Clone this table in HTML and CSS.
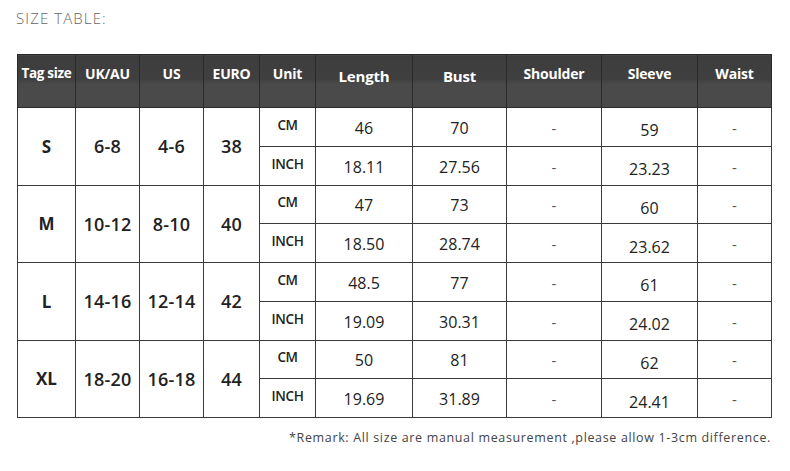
FILE: index.html
```html
<!DOCTYPE html>
<html>
<head>
<meta charset="utf-8">
<link rel="stylesheet" href="styles.css">
</head>
<body>
<div class="page">
  <div class="title">SIZE TABLE:</div>
  <table class="sizes">
    <colgroup>
      <col class="c-tag"><col class="c-uk"><col class="c-us"><col class="c-eu"><col class="c-unit">
      <col class="c-len"><col class="c-bust"><col class="c-sho"><col class="c-sle"><col class="c-wai">
    </colgroup>
    <thead>
      <tr>
        <th class="small">Tag size</th><th>UK/AU</th><th>US</th><th>EURO</th><th>Unit</th>
        <th class="big">Length</th><th class="big">Bust</th><th>Shoulder</th><th>Sleeve</th><th>Waist</th>
      </tr>
    </thead>
    <tbody>
      <tr><td rowspan="2" class="sz">S</td><td rowspan="2" class="num">6-8</td><td rowspan="2" class="num">4-6</td><td rowspan="2" class="num">38</td><td class="unit">CM</td><td>46</td><td>70</td><td class="dash">-</td><td class="low">59</td><td class="dash">-</td></tr>
      <tr><td class="unit">INCH</td><td>18.11</td><td>27.56</td><td class="dash">-</td><td class="low">23.23</td><td class="dash">-</td></tr>
      <tr><td rowspan="2" class="sz">M</td><td rowspan="2" class="num">10-12</td><td rowspan="2" class="num">8-10</td><td rowspan="2" class="num">40</td><td class="unit">CM</td><td>47</td><td>73</td><td class="dash">-</td><td class="low">60</td><td class="dash">-</td></tr>
      <tr><td class="unit">INCH</td><td>18.50</td><td>28.74</td><td class="dash">-</td><td class="low">23.62</td><td class="dash">-</td></tr>
      <tr><td rowspan="2" class="sz">L</td><td rowspan="2" class="num">14-16</td><td rowspan="2" class="num">12-14</td><td rowspan="2" class="num">42</td><td class="unit">CM</td><td>48.5</td><td>77</td><td class="dash">-</td><td class="low">61</td><td class="dash">-</td></tr>
      <tr><td class="unit">INCH</td><td>19.09</td><td>30.31</td><td class="dash">-</td><td class="low">24.02</td><td class="dash">-</td></tr>
      <tr><td rowspan="2" class="sz">XL</td><td rowspan="2" class="num">18-20</td><td rowspan="2" class="num">16-18</td><td rowspan="2" class="num">44</td><td class="unit">CM</td><td>50</td><td>81</td><td class="dash">-</td><td class="low">62</td><td class="dash">-</td></tr>
      <tr><td class="unit">INCH</td><td>19.69</td><td>31.89</td><td class="dash">-</td><td class="low">24.41</td><td class="dash">-</td></tr>
    </tbody>
  </table>
  <div class="remark">*Remark: All size are manual measurement ,please allow 1-3cm difference.</div>
</div>
</body>
</html>
```
FILE: styles.css
```css
html, body {
  margin: 0;
  padding: 0;
  background: #fff;
}
.page {
  width: 790px;
  height: 471px;
  padding: 9px 0 0 17px;
  box-sizing: border-box;
  font-family: "Open Sans", "Liberation Sans", sans-serif;
  color: #222;
}
.title {
  font-size: 15px;
  font-weight: 300;
  color: #666;
  letter-spacing: 1.1px;
  margin-left: -1px;
  height: 45px;
  line-height: 18px;
}
.sizes {
  border-collapse: collapse;
  table-layout: fixed;
  width: 754px;
}
.c-tag { width: 58px; }
.c-uk { width: 64px; }
.c-us { width: 64px; }
.c-eu { width: 56px; }
.c-unit { width: 56px; }
.c-len { width: 97px; }
.c-bust { width: 94px; }
.c-sho { width: 95px; }
.c-sle { width: 96px; }
.c-wai { width: 74px; }
.sizes th {
  height: 53px;
  box-sizing: border-box;
  border: 1px solid #2a2a2a;
  background: linear-gradient(#3d3d3d 0%, #3f3f3f 45%, #4a4a4a 55%, #4a4a4a 100%);
  color: #fff;
  font-size: 14px;
  font-weight: 700;
  vertical-align: top;
  padding: 9px 0 0;
  line-height: 20px;
  white-space: nowrap;
  letter-spacing: -0.2px;
}
.sizes th.small {
  font-size: 13.5px;
  padding-top: 8px;
  letter-spacing: -0.3px;
}
.sizes th.big {
  font-size: 15px;
  padding-top: 11px;
}
.sizes td {
  height: 38.75px;
  box-sizing: border-box;
  border: 1px solid #3a3a3a;
  text-align: center;
  vertical-align: middle;
  padding: 2px 0 0;
  font-size: 16px;
  color: #222;
}
.sizes td.sz {
  font-size: 17px;
  font-weight: 700;
  padding: 0;
}
.sizes td.num {
  font-size: 18px;
  font-weight: 600;
  padding: 0;
  letter-spacing: 0.2px;
}
.sizes td.unit {
  font-size: 13.5px;
  font-weight: 600;
  padding: 0 0 4px;
  letter-spacing: -0.4px;
}
.sizes td.low {
  padding-top: 7px;
}
.sizes td.dash {
  font-size: 15px;
  color: #555;
}
.remark {
  margin-top: 11px;
  width: 754px;
  text-align: right;
  font-size: 12.5px;
  color: #444;
  letter-spacing: 0.65px;
}
```
